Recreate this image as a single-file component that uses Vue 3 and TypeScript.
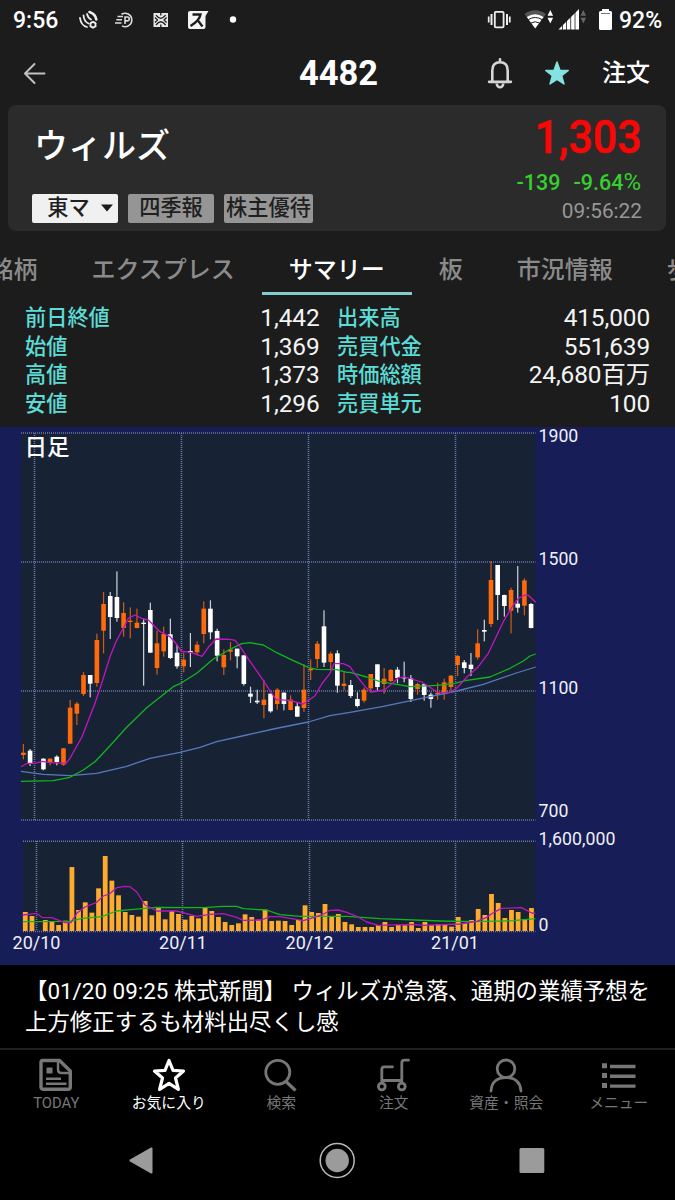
<script setup lang="ts">
type Candle = [index: number, up: 0 | 1, high: number, top: number, bottom: number, low: number]
type Run = [offset: number, points: number[]]

// Vertical values are stored in thirds of a pixel below the pane origin.
const candles: Candle[] = [
  [0, 1, 612, 638, 645, 658], [1, 0, 627, 632, 669, 678], [3, 0, 655, 656, 688, 691], [4, 1, 655, 656, 668, 676],
  [5, 0, 646, 650, 666, 676], [6, 1, 624, 625, 674, 677], [7, 1, 480, 503, 611, 612], [8, 1, 486, 491, 521, 555],
  [9, 1, 396, 405, 462, 468], [10, 0, 405, 405, 431, 472], [11, 1, 281, 300, 429, 440], [12, 1, 156, 192, 272, 340],
  [13, 0, 156, 168, 231, 297], [14, 0, 94, 171, 234, 245], [15, 1, 187, 219, 264, 290], [16, 1, 202, 242, 246, 295],
  [17, 1, 206, 248, 264, 265], [18, 0, 238, 248, 252, 437], [19, 0, 188, 210, 338, 339], [20, 1, 272, 310, 384, 404],
  [21, 1, 260, 282, 334, 350], [22, 0, 236, 283, 354, 357], [23, 0, 315, 338, 379, 386], [24, 1, 338, 359, 379, 397],
  [25, 0, 279, 333, 338, 381], [26, 1, 304, 314, 337, 346], [27, 1, 184, 206, 282, 310], [28, 0, 181, 206, 277, 298],
  [29, 0, 266, 273, 347, 364], [30, 1, 328, 345, 382, 405], [31, 1, 306, 329, 335, 361], [32, 0, 326, 326, 349, 385],
  [33, 0, 346, 346, 432, 437], [34, 0, 440, 461, 470, 489], [35, 0, 449, 482, 487, 492], [36, 1, 420, 479, 495, 535],
  [37, 0, 461, 461, 514, 518], [38, 1, 444, 449, 492, 509], [39, 0, 457, 458, 492, 511], [40, 1, 466, 479, 510, 511],
  [41, 0, 487, 499, 530, 531], [42, 1, 373, 449, 504, 516], [43, 1, 358, 386, 391, 420], [44, 1, 303, 311, 357, 384],
  [45, 0, 211, 259, 368, 381], [46, 1, 335, 341, 366, 390], [47, 0, 331, 340, 437, 458], [48, 1, 397, 431, 438, 450],
  [49, 0, 420, 435, 468, 474], [50, 0, 457, 477, 498, 502], [51, 1, 443, 449, 482, 488], [52, 1, 402, 402, 445, 458],
  [53, 0, 373, 373, 441, 452], [54, 1, 384, 416, 432, 461], [55, 1, 387, 390, 423, 427], [56, 0, 381, 389, 414, 430],
  [57, 0, 365, 411, 415, 427], [58, 0, 405, 415, 477, 486], [59, 1, 428, 432, 447, 464], [60, 0, 432, 433, 465, 482],
  [61, 0, 458, 464, 477, 503], [62, 1, 428, 459, 463, 479], [63, 1, 416, 427, 462, 479], [64, 1, 405, 407, 441, 452],
  [65, 1, 345, 348, 375, 408], [66, 0, 360, 367, 384, 400], [67, 0, 339, 374, 387, 408], [68, 1, 268, 310, 352, 359],
  [69, 0, 239, 270, 275, 304], [70, 1, 64, 120, 252, 261], [71, 0, 75, 75, 165, 240], [72, 0, 164, 165, 198, 230],
  [73, 1, 143, 150, 212, 280], [74, 0, 78, 191, 203, 218], [75, 1, 115, 121, 197, 226], [76, 0, 189, 192, 264, 265],
]

const volumes: number[] = [
  306, 318, 363, 330, 336, 345, 332, 171, 300, 277, 308, 235, 138, 212, 256, 306, 315, 320, 273, 316,
  292, 328, 303, 312, 329, 318, 325, 291, 303, 321, 336, 345, 340, 313, 321, 329, 299, 333, 332, 333,
  345, 330, 286, 306, 309, 282, 320, 312, 336, 343, 351, 351, 351, 345, 336, 351, 345, 346, 336, 354,
  336, 345, 342, 345, 350, 321, 339, 330, 297, 315, 252, 279, 324, 300, 306, 327, 294,
]

const PRICE_Y = 540
const VOLUME_Y = 810
const BASE = 363

const cx = (i: number) => 23.4 + 6.68 * i
const vx = (i: number) => 25.3 + 6.66 * i

function line(originY: number, runs: Run[]): string {
  const out: string[] = []
  for (const [offset, p] of runs) {
    for (let i = 0; i < p.length; i += 2) {
      out.push(`${(offset + p[i] / 3).toFixed(1)},${(originY + p[i + 1] / 3).toFixed(1)}`)
    }
  }
  return out.join(' ')
}

const shortAvg = line(PRICE_Y, [
  [10, [33, 680, 52, 670, 75, 670, 97, 664, 120, 668, 168, 670, 180, 655, 216, 590, 255, 490, 275, 430, 300, 350, 318, 305, 345, 255, 355, 235, 375, 225, 395, 235, 415, 240, 450, 275, 480, 290, 500, 313, 515, 335]],
  [180, [10, 334, 35, 338, 66, 349, 85, 322, 108, 297, 150, 298, 165, 301, 180, 320, 200, 350, 240, 407, 288, 479, 330, 481, 370, 492, 405, 467, 425, 432, 450, 400, 462, 371, 490, 371, 510, 380]],
  [350, [15, 402, 50, 445, 65, 456, 103, 450, 125, 432, 145, 413, 165, 411, 215, 426, 265, 458, 300, 457, 320, 445, 350, 412, 385, 380, 415, 340, 460, 245, 485, 202, 505, 175, 525, 165, 535, 166, 557, 187]],
])
const midAvg = line(PRICE_Y, [
  [10, [33, 724, 130, 722, 180, 712, 220, 690, 255, 665, 300, 617, 350, 562, 410, 503, 490, 440]],
  [180, [0, 431, 50, 400, 100, 357, 150, 328, 185, 311, 210, 308, 250, 315, 290, 338, 340, 362, 385, 382, 410, 388, 470, 389, 500, 397]],
  [350, [0, 397, 50, 411, 90, 425, 180, 440, 260, 436, 315, 430, 345, 422, 420, 411, 480, 385, 520, 363, 540, 348, 557, 342]],
])
const longAvg = line(PRICE_Y, [
  [10, [33, 694, 100, 703, 180, 707, 260, 700, 350, 679, 420, 655]],
  [180, [0, 637, 60, 622, 110, 605, 200, 585, 280, 567, 385, 546, 450, 527]],
  [350, [0, 517, 100, 499, 240, 470, 320, 453, 400, 433, 490, 402, 557, 381]],
])
const volShort = line(VOLUME_Y, [
  [10, [38, 315, 80, 310, 95, 322, 125, 323, 165, 338, 183, 338, 200, 310, 225, 291, 260, 277, 280, 258, 298, 252, 320, 233, 345, 229, 360, 230, 380, 246, 405, 285, 440, 303, 500, 303, 560, 319, 600, 313, 640, 311, 680, 322, 700, 331, 755, 330, 780, 320]],
  [280, [0, 320, 70, 332, 110, 320, 135, 310, 150, 301, 175, 300, 200, 307, 230, 319, 260, 336, 295, 346, 400, 343, 430, 346, 540, 342, 590, 334, 620, 322, 640, 308, 665, 295, 725, 293, 740, 301, 755, 309, 766, 310]],
])
const volLong = line(VOLUME_Y, [
  [10, [38, 335, 180, 334, 215, 325, 275, 320, 320, 303, 370, 298, 440, 292, 580, 293, 640, 289, 680, 289, 700, 296, 770, 300, 800, 311]],
  [280, [0, 314, 60, 319, 200, 319, 300, 326, 480, 333, 580, 335, 700, 332, 766, 326]],
])

const priceLabels = [
  { t: '1900', y: 441.5 }, { t: '1500', y: 565 }, { t: '1100', y: 694 }, { t: '700', y: 817 },
]
const dateLabels = [
  { t: '20/10', x: 36.5 }, { t: '20/11', x: 183 }, { t: '20/12', x: 309.5 }, { t: '21/01', x: 455 },
]

const tabs = ['銘柄', 'エクスプレス', 'サマリー', '板', '市況情報', '歩値']
const activeTab = 'サマリー'

const stats: [string, string, string, string][] = [
  ['前日終値', '1,442', '出来高', '415,000'],
  ['始値', '1,369', '売買代金', '551,639'],
  ['高値', '1,373', '時価総額', '24,680百万'],
  ['安値', '1,296', '売買単元', '100'],
]

const nav = [
  { id: 'today', label: 'TODAY' }, { id: 'fav', label: 'お気に入り' }, { id: 'search', label: '検索' },
  { id: 'order', label: '注文' }, { id: 'assets', label: '資産・照会' }, { id: 'menu', label: 'メニュー' },
]
</script>

<template>
  <div class="screen" lang="ja">
    <div class="status">
      <span class="clock">9:56</span>
      <svg class="st-left" width="180" height="40" viewBox="70 0 180 40">
        <g fill="none" stroke="#eee" stroke-width="1.800" stroke-linecap="round">
          <path d="M80 18Q81 25.500 87 27" />
          <path d="M83.500 15.500Q84 21.500 88.500 23.500" />
          <path d="M87 14Q88 18 91 19.500" />
          <path d="M89.500 12Q95.500 14 96.300 19.500" stroke-width="2.600" />
          <circle cx="93" cy="24.800" r="2.600" stroke-width="1.700" />
        </g>
        <path d="M93 21V22M93 27.600V28.600M89.700 22.900L90.500 23.400M96.300 22.900L95.500 23.400M89.700 26.700L90.500 26.200M96.300 26.700L95.500 26.200" stroke="#eee" stroke-width="1.500" />
        <g fill="none" stroke="#ddd" stroke-width="1.600">
          <path d="M121.500 14.300A6.700 6.700 0 1 1 122 25.900" />
          <path d="M117.500 16.500H123M116.300 19.800H122M115 23H121.500" />
          <path d="M125 24V17H127.300A1.900 1.900 0 0 1 127.300 20.900H125" />
        </g>
        <rect x="153.500" y="13" width="14.500" height="14" fill="#e8e8e8" />
        <g fill="none" stroke="#1c1c1c" stroke-width="1.300">
          <path d="M156 15.200Q160.800 21.500 165.600 15.200M156 25Q160.800 18.500 165.600 25M155 17.500L157.500 20L155 22.500M166.600 17.500L164.100 20L166.600 22.500M160.800 13V15.500M160.800 24.500V27" />
        </g>
        <path d="M190 11H208.500L205.500 16V27Q205.500 29 203.500 29H190Q188 29 188 27V13Q188 11 190 11Z" fill="#f4f4f4" />
        <path d="M192.500 14.500H200.500Q199.500 20.500 190.500 26M197.500 20L202.500 26.500" fill="none" stroke="#1c1c1c" stroke-width="2.300" />
        <circle cx="233" cy="19.500" r="3.200" fill="#fff" />
      </svg>
      <i class="grow"></i>
      <svg width="129" height="40" viewBox="485 0 129 40">
        <g fill="none" stroke="#eee">
          <rect x="494.800" y="11.800" width="8.800" height="15.500" rx="1" stroke-width="1.800" />
          <path d="M491.500 14V25M507 14V25" stroke-width="2" />
          <path d="M488.700 16.500V22.500M509.800 16.500V22.500" stroke-width="1.700" />
        </g>
        <path d="M524.500 14Q535 6.500 546 14L543 18Q535 13 527.500 18Z" fill="#555" />
        <path d="M526.800 17Q535 11.500 543.600 17L535.200 28.500Z" fill="#fff" />
        <path d="M528.500 19.500Q535.200 15.500 542 19.500M531 23Q535.200 20.500 539.500 23" fill="none" stroke="#1c1c1c" stroke-width="1" />
        <path d="M547.500 15.800L550.300 10L553.100 15.800ZM547.500 17.800L550.300 23.600L553.100 17.800Z" fill="#fff" />
        <path d="M558.500 29.500L579 9V29.500Z" fill="#fff" />
        <path d="M562.500 10V30M566.500 10V30M570.700 10V30M575 10V30" stroke="#1c1c1c" stroke-width=".8" />
        <path d="M580.500 15.800L583.300 10L586.100 15.800ZM580.500 17.800L583.300 23.600L586.100 17.800Z" fill="#666" />
        <path d="M602 9H609V11H610.500Q612 11 612 12.500V28.500Q612 30 610.500 30H600.500Q599 30 599 28.500V12.500Q599 11 600.500 11H602Z" fill="#fff" />
        <path d="M601 13.500H610" stroke="#777" stroke-width="1" />
      </svg>
      <span class="batt">92%</span>
    </div>

    <header class="head">
      <svg class="back" width="26" height="26" viewBox="0 0 26 26"><path d="M22.500 13.500H3.500M12.500 4L3 13.500L12.500 23" fill="none" stroke="#c2c2c2" stroke-width="2" stroke-linecap="round" stroke-linejoin="round" /></svg>
      <h1>4482</h1>
      <div class="actions">
        <svg width="26" height="34" viewBox="0 0 26 34">
          <path d="M13 3.200V6M5.300 25.500V14.500C5.300 9.200 8 6.300 13 6.300S20.700 9.200 20.700 14.500V25.500" fill="none" stroke="#d6d6d6" stroke-width="2.600" stroke-linecap="round" />
          <path d="M2.200 25.800H23.800" stroke="#d6d6d6" stroke-width="2.800" stroke-linecap="round" />
          <path d="M9.800 27.500A3.200 3.800 0 0 0 16.200 27.500" fill="none" stroke="#d6d6d6" stroke-width="2.600" />
        </svg>
        <svg class="star" width="26" height="26" viewBox="0 0 26 26"><path d="M13 2L15.900 10.100L24.300 10.400L17.700 15.600L20 24L13 19.300L6 24L8.300 15.600L1.700 10.400L10.100 10.100Z" fill="#83e3e2" stroke="#83e3e2" stroke-width="1.400" stroke-linejoin="round" /></svg>
        <span class="order">注文</span>
      </div>
    </header>

    <section class="card">
      <div class="c-left">
        <div class="name">ウィルズ</div>
        <div class="chips">
          <span class="chip market">東マ<svg width="12" height="8" viewBox="0 0 12 8"><path d="M0 .5H12L6 7.500Z" fill="#1c1c1c" /></svg></span>
          <span class="chip">四季報</span>
          <span class="chip wide">株主優待</span>
        </div>
      </div>
      <div class="c-right">
        <svg class="price" width="130" height="60" viewBox="0 0 130 60"><text x="22.500" y="45" textLength="107" lengthAdjust="spacingAndGlyphs">1,303</text></svg>
        <div class="chg"><span>-139</span><span>-9.64<b>%</b></span></div>
        <div class="time">09:56:22</div>
      </div>
    </section>

    <nav class="tabs">
      <span v-for="t in tabs" :key="t" class="tab" :class="{ on: t === activeTab }">{{ t }}</span>
    </nav>

    <section class="stats">
      <div v-for="r in stats" :key="r[0]" class="row">
        <span class="k">{{ r[0] }}</span><span class="v">{{ r[1] }}</span>
        <span class="k second">{{ r[2] }}</span><span class="v">{{ r[3] }}</span>
      </div>
    </section>

    <svg class="chart" width="675" height="538" viewBox="0 427 675 538">
      <rect x="21" y="433" width="514.500" height="387" fill="#172335" />
      <rect x="23" y="841" width="512.500" height="90" fill="#172335" />
      <g class="grid">
        <path v-for="y in [433, 562, 691, 820]" :key="y" :d="`M21 ${y}H535.500`" />
        <path v-for="x in [34, 181, 308, 455]" :key="x" :d="`M${x}.500 433V820`" />
        <path d="M23 841.300H535.500M23 931.500H535.500" />
        <path v-for="x in [36, 182, 309, 455]" :key="'v' + x" :d="`M${x}.500 841V931`" />
      </g>
      <g v-for="c in candles" :key="c[0]" :class="c[1] ? 'up' : 'down'">
        <rect class="wick" :x="cx(c[0]) - 0.6" :y="540 + c[2] / 3" width="1.200" :height="(c[5] - c[2]) / 3" />
        <rect :x="cx(c[0]) - 2.3" :y="540 + c[3] / 3" width="4.600" :height="(c[4] - c[3]) / 3" />
      </g>
      <rect v-for="(v, i) in volumes" :key="i" :x="vx(i) - 2.4" :y="810 + v / 3" width="4.800" :height="(BASE - v) / 3" fill="#ffab2e" />
      <g class="avg">
        <polyline :points="longAvg" stroke="#5878bd" />
        <polyline :points="midAvg" stroke="#12b51d" />
        <polyline :points="shortAvg" stroke="#c215c2" />
        <polyline :points="volLong" stroke="#12b51d" />
        <polyline :points="volShort" stroke="#b617b9" />
      </g>
      <g class="axis">
        <text v-for="p in priceLabels" :key="p.t" x="538.500" :y="p.y">{{ p.t }}</text>
        <text x="538.500" y="844.500" textLength="77">1,600,000</text>
        <text x="538.500" y="931">0</text>
        <text v-for="d in dateLabels" :key="d.t" class="date" :x="d.x" y="949.300">{{ d.t }}</text>
      </g>
      <text class="period" x="24.500" y="455">日足</text>
    </svg>

    <section class="news">【01/20 09:25 株式新聞】 ウィルズが急落、通期の業績予想を<br />上方修正するも材料出尽くし感</section>

    <nav class="bottom">
      <div v-for="n in nav" :key="n.id" class="item" :class="{ on: n.id === 'fav' }">
        <svg width="36" height="36" viewBox="0 0 36 36" fill="none" stroke="currentColor" stroke-width="2.800">
          <template v-if="n.id === 'today'">
            <path d="M4.500 3.500H21.500L32.300 14V30Q32.300 32.300 30 32.300H5Q3 32.300 3 30V5.500Q3 3.500 4.500 3.500Z" stroke-width="3.400" stroke-linejoin="round" />
            <path d="M20 4V12.500Q20 16 23.500 16H32" stroke-width="2.400" />
            <path d="M8.500 10.500H14.500V16.500H8.500Z" fill="currentColor" stroke="none" />
            <path d="M8 21.800H23M8 26.800H28.500" stroke-width="2.400" />
          </template>
          <path v-else-if="n.id === 'fav'" d="M18 3.500L22 13.300L32.500 14L24.500 21L27.400 32.500L18 26.300L8.600 32.500L11.500 21L3.500 14L14 13.300Z" stroke-width="3.200" stroke-linejoin="round" />
          <template v-else-if="n.id === 'search'"><circle cx="14.800" cy="15.300" r="12" /><path d="M23 24.500L32.500 33.500" stroke-width="3.200" /></template>
          <template v-else-if="n.id === 'order'">
            <path d="M5.800 26V12.500Q5.800 9.800 8.300 9.800H16.500M25.800 26V6Q25.800 3.200 28.300 3.200H32.500M7 23.500H25.500" stroke-linejoin="round" stroke-linecap="round" />
            <circle cx="5.800" cy="29.500" r="3.400" /><circle cx="25.800" cy="29.500" r="3.400" />
          </template>
          <template v-else-if="n.id === 'assets'"><circle cx="18" cy="11.800" r="8.800" /><path d="M3 34C3.500 24.500 10 20.500 18 20.500S32.500 24.500 33 34" stroke-linecap="round" /></template>
          <template v-else><path d="M1 8.700H6M1 18.500H6M1 28.500H6" stroke-width="5" /><path d="M9 9.500H34.500M9 19.300H34.500M9 29.100H34.500" stroke-width="3.400" /></template>
        </svg>
        <span>{{ n.label }}</span>
      </div>
    </nav>

    <div class="system">
      <svg width="675" height="40" viewBox="0 1141 675 40">
        <path d="M130 1159.500L151 1147.600Q152.500 1147 152.500 1148.500V1172.500Q152.500 1174 151 1173.400L130 1161.500Q128.500 1160.500 130 1159.500Z" fill="#9b9b9b" />
        <circle cx="337.200" cy="1160.500" r="17" fill="none" stroke="#b8b8b8" stroke-width="1.500" />
        <circle cx="337.200" cy="1160.500" r="11.700" fill="#9b9b9b" />
        <rect x="519.500" y="1148" width="24.800" height="25" rx="1.500" fill="#9b9b9b" />
      </svg>
    </div>
  </div>
</template>

<style scoped>
.screen { width: 675px; height: 1200px; background: #1c1c1c; color: #fff; overflow: hidden; display: flex; flex-direction: column; font-family: Roboto, "Noto Sans CJK JP", sans-serif; white-space: nowrap; }
.screen > * { flex: none; box-sizing: border-box; }
svg { display: block; flex: none; }
.grow { flex: 1; }
.status { height: 40px; display: flex; align-items: center; padding: 0 13px 0 13px; font-size: 23px; font-weight: 500; }
.clock { width: 57px; line-height: 38px; padding-top: 2px; }
.batt { width: 43px; margin-left: 5px; line-height: 38px; padding-top: 2px; }
.head { height: 65px; display: grid; grid-template-columns: 1fr auto 1fr; align-items: center; padding: 0 25px 0 22px; }
.back { margin-top: 1px; }
h1 { margin: 0 -2px 0 3px; font-size: 34.500px; font-weight: 700; line-height: 40px; }
.actions { display: flex; align-items: center; justify-content: flex-end; }
.star { margin: 1px 32.500px 0 31px; }
.order { font-size: 24px; font-weight: 500; line-height: 30px; }
.card { margin: 0 9px 0 8px; height: 126px; border-radius: 8px; background: #2b2b2b; display: flex; justify-content: space-between; padding: 0 24px; }
.name { margin-top: 21px; font-size: 34px; font-weight: 500; line-height: 40px; padding-left: 2px; }
.chips { margin-top: 27.500px; display: flex; gap: 10px; }
.chip { width: 86px; height: 29px; border-radius: 2px; background: #959595; color: #1f1f1f; font-size: 21.200px; font-weight: 500; line-height: 28px; display: flex; justify-content: center; align-items: center; box-sizing: border-box; }
.chip.market { background: #f0f0f0; gap: 11px; padding-left: 10px; }
.chip.wide { width: 89px; }
.c-right { display: flex; flex-direction: column; align-items: flex-end; }
.price { margin-top: 3px; }
.price text { font-family: Roboto, sans-serif; font-size: 46.500px; font-weight: 500; fill: #f90606; stroke: #f90606; stroke-width: .5px; }
.chg { margin-top: 1px; height: 28px; line-height: 28px; font-size: 21.500px; font-weight: 500; color: #36cf2f; display: flex; gap: 13px; margin-right: 1px; }
.chg b { font-weight: 400; font-size: 24px; line-height: 20px; }
.time { margin-top: 1px; line-height: 26px; font-size: 20.800px; color: #979797; }
.tabs { height: 64px; display: flex; margin-left: -37.500px; }
.tab { padding: 24px 27px 0; height: 64px; box-sizing: border-box; font-size: 24px; font-weight: 500; line-height: 30px; color: #8b8b8b; border-bottom: 3px solid transparent; }
.tab.on { color: #fff; border-color: #84cccb; }
.stats { height: 132px; padding: 9px 25px 0; }
.row { height: 28.700px; line-height: 28.700px; display: grid; grid-template-columns: 152px 142.500px 152px 1fr; }
.k { font-size: 21.200px; font-weight: 500; color: #5bdcd7; }
.k.second { padding-left: 17.500px; }
.v { font-size: 24.400px; letter-spacing: -.1px; text-align: right; color: #f4f4f4; }
.chart { background: #171e57; }
.grid path { stroke: #6a79a5; stroke-width: 1.600; stroke-dasharray: 1 1; fill: none; }
.up { fill: #ff6a0a; }
.down { fill: #fff; }
.wick { opacity: .8; }
.avg polyline { fill: none; stroke-width: 1.300; stroke-linejoin: round; }
.axis text { font-size: 17.700px; fill: #f0f0f6; }
.axis .date { font-size: 18px; text-anchor: middle; }
.period { font-size: 22.500px; font-weight: 500; fill: #fff; }
.news { height: 83px; background: #000; padding: 11px 0 0 25px; font-size: 22.420px; line-height: 31px; }
.bottom { height: 75px; background: #000; border-top: 2px solid #202020; display: grid; grid-template-columns: repeat(6, 112.500px); }
.item { display: flex; flex-direction: column; align-items: center; color: #777; padding-top: 7px; }
.item span { font-size: 14.800px; line-height: 20px; }
.item.on { color: #fff; }
.system { flex: 1 0 auto; background: #000; padding-top: 18px; }
</style>

<style>
body { margin: 0; background: #000; }
</style>
